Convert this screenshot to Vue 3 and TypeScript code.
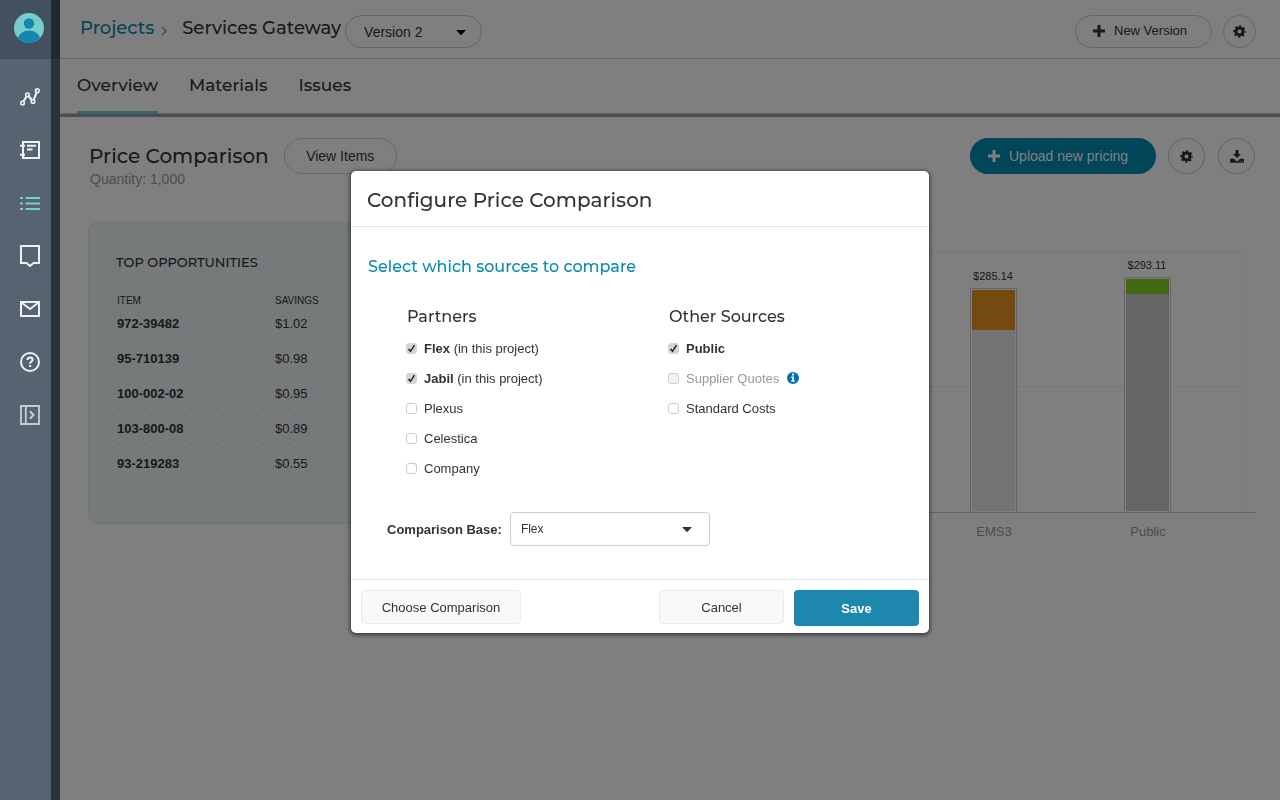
<script setup lang="ts">
import { ref } from 'vue'

interface Source {
  id: string
  name: string
  note?: string
  strong?: boolean
  disabled?: boolean
  info?: boolean
  checked: boolean
}

const tabs = ['Overview', 'Materials', 'Issues']
const activeTab = ref('Overview')
const version = ref('Version 2')
const base = ref('Flex')

const opportunities = [
  { item: '972-39482', savings: '$1.02' },
  { item: '95-710139', savings: '$0.98' },
  { item: '100-002-02', savings: '$0.95' },
  { item: '103-800-08', savings: '$0.89' },
  { item: '93-219283', savings: '$0.55' },
]

const bars = [
  { name: 'EMS3', total: '$285.14', height: 224, top: 40, topColor: '#ea9520', fill: '#e6e6e6' },
  { name: 'Public', total: '$293.11', height: 235, top: 15, topColor: '#7ed321', fill: '#cacaca' },
]

const partners = ref<Source[]>([
  { id: 'flex', name: 'Flex', note: '(in this project)', strong: true, checked: true },
  { id: 'jabil', name: 'Jabil', note: '(in this project)', strong: true, checked: true },
  { id: 'plexus', name: 'Plexus', checked: false },
  { id: 'celestica', name: 'Celestica', checked: false },
  { id: 'company', name: 'Company', checked: false },
])

const others = ref<Source[]>([
  { id: 'public', name: 'Public', strong: true, checked: true },
  { id: 'quotes', name: 'Supplier Quotes', disabled: true, info: true, checked: false },
  { id: 'standard', name: 'Standard Costs', checked: false },
])

const groups = [
  { title: 'Partners', items: partners },
  { title: 'Other Sources', items: others },
]
</script>

<template>
  <div class="app">
    <aside class="sidebar">
      <div class="account">
        <button class="avatar" type="button" title="Account">
          <svg width="30" height="30" viewBox="0 0 30 30">
            <defs><clipPath id="disc"><circle cx="15" cy="15" r="15" /></clipPath></defs>
            <circle cx="15" cy="15" r="15" fill="#76cdca" />
            <g clip-path="url(#disc)" fill="#1587ae">
              <circle cx="15" cy="10.500" r="5.200" />
              <path d="M3 29C4 21.500 8.500 17.500 15 17.500S26 21.500 27 29v2H3z" />
            </g>
          </svg>
        </button>
      </div>
      <nav class="menu">
        <a href="#trends" title="Trends">
          <svg viewBox="0 0 20 20" width="20" height="20" fill="none" stroke="currentColor" stroke-width="1.600">
            <circle cx="2.500" cy="16" r="1.800" /><circle cx="7.500" cy="7.800" r="1.800" />
            <circle cx="13" cy="14.500" r="1.800" /><circle cx="17.300" cy="3.700" r="1.800" />
            <path d="M3.400 14.500 6.600 9.200M8.600 9l3.300 4.200M13.600 12.900l3.100-7.600" stroke-width="2.200" />
          </svg>
        </a>
        <a href="#notebook" title="Notebook">
          <svg viewBox="0 0 20 20" width="20" height="20" fill="none" stroke="currentColor">
            <path d="M3 2h16v16H3z" stroke-width="2" />
            <path d="M0 5.800h5M0 14.800h5M7 5.800h9M7 9.500h5.500" stroke-width="2" />
          </svg>
        </a>
        <a href="#list" title="List" class="current">
          <svg viewBox="0 0 20 20" width="20" height="20" fill="none" stroke="currentColor" stroke-width="2">
            <path d="M0 5h3M5.500 5H20M0 10.500h3M5.500 10.500H20M0 16h3M5.500 16H20" />
          </svg>
        </a>
        <a href="#messages" title="Messages">
          <svg viewBox="0 0 20 22" width="20" height="22" fill="none" stroke="currentColor" stroke-width="2">
            <path d="M1 1h18v17h-5.500L10 21l-3.500-3H1z" />
          </svg>
        </a>
        <a href="#mail" title="Mail">
          <svg viewBox="0 0 20 20" width="20" height="20" fill="none" stroke="currentColor" stroke-width="2">
            <path d="M1 3h18v14H1zM1.500 3.500 10 10l8.500-6.500" />
          </svg>
        </a>
        <a href="#help" title="Help">
          <svg viewBox="0 0 20 20" width="20" height="20" fill="none" stroke="currentColor" stroke-width="2">
            <circle cx="10" cy="10" r="9" />
            <path d="M7.500 8c0-1.700 1.100-2.500 2.500-2.500s2.600.8 2.600 2.200c0 1.800-2.500 1.900-2.500 4M10.100 13v2" />
          </svg>
        </a>
        <a href="#expand" title="Expand" class="soft">
          <svg viewBox="0 0 20 20" width="20" height="20" fill="none" stroke="currentColor" stroke-width="1.800">
            <path d="M1 1h18v18H1zM5.800 1v18" />
            <path d="M10 6.200l3.500 3.800-3.500 3.800" stroke-width="2" />
          </svg>
        </a>
      </nav>
    </aside>

    <main class="main">
      <header class="topbar">
        <a class="crumb-link" href="#projects">Projects</a>
        <svg class="chevron" viewBox="0 0 6 10" width="6" height="10" fill="none" stroke="#999" stroke-width="1.500">
          <path d="M1 1l4 4-4 4" />
        </svg>
        <h1 class="crumb-title">Services Gateway</h1>
        <span class="version">
          <select v-model="version" class="pill version-select" aria-label="Version">
            <option>Version 2</option>
          </select>
          <svg class="caret" viewBox="0 0 10 5" width="10" height="5"><path d="M1 0h8q1 0 .3.800L5.800 4.500q-.8.800-1.600 0L.700.800Q0 0 1 0z" /></svg>
        </span>
        <div class="spacer"></div>
        <button class="pill new-version" type="button">
          <svg viewBox="0 0 12 12" width="12" height="12"><path d="M4.500 0h3v4.500H12v3H7.500V12h-3V7.500H0v-3h4.500z" fill="currentColor" /></svg>
          New Version
        </button>
        <button class="round small" type="button" title="Settings">
          <svg viewBox="0 0 13 13" width="13" height="13" fill="none" stroke="#333">
            <circle cx="6.500" cy="6.500" r="3.500" stroke-width="3" />
            <circle cx="6.500" cy="6.500" r="5.300" stroke-width="2" stroke-dasharray="2.081 2.081" stroke-dashoffset="1.040" />
          </svg>
        </button>
      </header>

      <nav class="tabs">
        <a
          v-for="tab in tabs"
          :key="tab"
          :href="'#' + tab.toLowerCase()"
          :class="{ active: tab === activeTab }"
          @click="activeTab = tab"
        >{{ tab }}</a>
      </nav>

      <section class="content">
        <div class="title-row">
          <div class="title-block">
            <h2>Price Comparison</h2>
            <p>Quantity: 1,000</p>
          </div>
          <button class="pill view-items" type="button">View Items</button>
          <div class="spacer"></div>
          <button class="upload" type="button">
            <svg viewBox="0 0 12 12" width="12" height="12"><path d="M4.500 0h3v4.500H12v3H7.500V12h-3V7.500H0v-3h4.500z" fill="currentColor" /></svg>
            Upload new pricing
          </button>
          <button class="round" type="button" title="Comparison settings">
            <svg viewBox="0 0 13 13" width="13" height="13" fill="none" stroke="#333">
              <circle cx="6.500" cy="6.500" r="3.500" stroke-width="3" />
              <circle cx="6.500" cy="6.500" r="5.300" stroke-width="2" stroke-dasharray="2.081 2.081" stroke-dashoffset="1.040" />
            </svg>
          </button>
          <button class="round" type="button" title="Download">
            <svg viewBox="0 0 14 13" width="14" height="13">
              <path d="M5.500 0h3v4H11L7 8 3 4h2.500zM0 8.800h4l1.600 1.600q1.400 1 2.800 0L10 8.800h4V12q0 .8-.8.800H.8Q0 12.800 0 12zM9.600 11v.9h.9V11zm2 0v.9h.9V11z" fill="#333" fill-rule="evenodd" />
            </svg>
          </button>
        </div>

        <div class="panels">
          <section class="opportunities">
            <h3>TOP OPPORTUNITIES</h3>
            <table>
              <thead>
                <tr><th>ITEM</th><th>SAVINGS</th></tr>
              </thead>
              <tbody>
                <tr v-for="row in opportunities" :key="row.item">
                  <td class="item">{{ row.item }}</td>
                  <td>{{ row.savings }}</td>
                </tr>
              </tbody>
            </table>
          </section>

          <section class="chart">
            <div class="plot">
              <div v-for="bar in bars" :key="bar.name" class="column">
                <span class="total">{{ bar.total }}</span>
                <div class="bar" :style="{ height: bar.height + 'px' }">
                  <div class="bar-fill" :style="{ background: bar.fill }">
                    <div :style="{ height: bar.top + 'px', background: bar.topColor }"></div>
                  </div>
                </div>
              </div>
            </div>
            <div class="axis">
              <span v-for="bar in bars" :key="bar.name">{{ bar.name }}</span>
            </div>
          </section>
        </div>
      </section>
    </main>

    <div class="backdrop"></div>
    <div class="modal-layer">
      <form class="modal" role="dialog" aria-labelledby="modal-title" @submit.prevent>
        <header class="modal-head"><h2 id="modal-title">Configure Price Comparison</h2></header>
        <div class="modal-body">
          <h3>Select which sources to compare</h3>
          <div class="groups">
            <fieldset v-for="group in groups" :key="group.title">
              <legend>{{ group.title }}</legend>
              <div v-for="source in group.items.value" :key="source.id" class="source" :class="{ disabled: source.disabled }">
                <input :id="source.id" v-model="source.checked" type="checkbox" :disabled="source.disabled" />
                <label :for="source.id">
                  <b v-if="source.strong">{{ source.name }}</b><template v-else>{{ source.name }}</template>
                  {{ source.note }}
                </label>
                <svg v-if="source.info" class="info" viewBox="0 0 12 12" width="12" height="12">
                  <circle cx="6" cy="6" r="6" fill="#0072bc" />
                  <path d="M5 1.600h2v1.800H5zM4.200 4.500H7v3.900h.9v1.300H4.200V8.400H5V5.700h-.8z" fill="#fff" />
                </svg>
              </div>
            </fieldset>
          </div>
          <div class="base">
            <label for="base">Comparison Base:</label>
            <span class="base-box">
              <select id="base" v-model="base"><option>Flex</option></select>
              <svg class="caret" viewBox="0 0 10 5" width="10" height="5"><path d="M1 0h8q1 0 .3.800L5.800 4.500q-.8.800-1.600 0L.700.800Q0 0 1 0z" fill="#333" /></svg>
            </span>
          </div>
        </div>
        <footer class="modal-foot">
          <button class="btn choose" type="button">Choose Comparison</button>
          <div class="spacer"></div>
          <button class="btn" type="button">Cancel</button>
          <button class="btn save" type="submit">Save</button>
        </footer>
      </form>
    </div>
  </div>
</template>

<style>
body {
  margin: 0;
}
</style>

<style scoped>
.app {
  display: flex;
  min-height: 100vh;
  background: #fff;
  color: #333;
  font-family: 'Liberation Sans', Arial, sans-serif;
  font-size: 13px;
}
.app *,
.app {
  box-sizing: border-box;
}
h1,
h2,
h3,
p {
  margin: 0;
}
h1,
h2,
h3,
legend,
.crumb-link,
.tabs a {
  font-family: Montserrat, Inter, sans-serif;
  font-weight: 500;
}
a {
  text-decoration: none;
}
button,
select {
  font-family: inherit;
  color: inherit;
  cursor: pointer;
}
.spacer {
  flex: 1;
}

/* Sidebar */
.sidebar {
  width: 60px;
  flex: none;
  background: #566472;
}
.account {
  height: 59px;
  padding: 13px 14px;
  background: #435060;
}
.avatar {
  display: block;
  padding: 0;
  border: 0;
  background: none;
}
.avatar svg {
  display: block;
}
.menu {
  padding-top: 11px;
}
.menu a {
  display: flex;
  align-items: center;
  justify-content: center;
  height: 53px;
  color: #eef0f2;
}
.menu .current {
  color: #76cdca;
}
.menu .soft {
  color: #c9cccf;
}

/* Top bar */
.main {
  flex: 1;
  min-width: 0;
}
.topbar {
  display: flex;
  align-items: flex-start;
  height: 59px;
  padding: 15px 24px 0 20px;
  border-bottom: 1px solid #ccc;
}
.crumb-link,
.crumb-title {
  font-size: 18px;
  line-height: 26px;
}
.crumb-link {
  color: #0889ae;
}
.chevron {
  margin: 11px 15px 0 7px;
}
.pill {
  border: 1px solid #ccc;
  border-radius: 18px;
  background: transparent;
  font-size: 14px;
}
.version,
.base-box {
  position: relative;
}
.version {
  margin-left: 4px;
}
.version-select {
  width: 137px;
  height: 33px;
  padding: 0 18px;
  appearance: none;
}
.caret {
  position: absolute;
  top: 15px;
  right: 16px;
  pointer-events: none;
}
.new-version {
  display: flex;
  align-items: center;
  justify-content: center;
  gap: 9px;
  width: 137px;
  height: 33px;
  padding: 0 7px 2px 0;
  font-size: 13px;
}
.round {
  display: flex;
  align-items: center;
  justify-content: center;
  width: 37px;
  height: 36px;
  margin-left: 13px;
  padding: 0;
  border: 1px solid #ccc;
  border-radius: 50%;
  background: transparent;
}
.round.small {
  width: 33px;
  height: 33px;
  margin-left: 11px;
}

/* Tabs */
.tabs {
  display: flex;
  gap: 31px;
  height: 58px;
  padding-left: 17px;
  border-bottom: 3px solid #949ba8;
  box-shadow: inset 0 -1px #ccc;
}
.tabs a {
  height: 55px;
  color: #333;
  font-size: 17px;
  line-height: 52px;
}
.tabs a.active {
  border-bottom: 3px solid #76cdca;
}

/* Content */
.content {
  padding: 21px 25px 0 28px;
}
.title-row {
  display: flex;
  align-items: flex-start;
}
.title-block {
  padding-left: 1px;
}
.title-block h2 {
  font-size: 20px;
  line-height: 36px;
}
.title-block p {
  padding-left: 1px;
  color: #999;
  font-size: 14px;
  line-height: 10px;
}
.view-items {
  width: 113px;
  height: 36px;
  margin-left: 15px;
}
.upload {
  display: flex;
  align-items: center;
  gap: 9px;
  width: 186px;
  height: 36px;
  padding: 0 18px;
  border: 0;
  border-radius: 18px;
  background: #008ab0;
  color: #fff;
  font-size: 14px;
}
.upload + .round {
  margin-left: 12px;
}
.panels {
  display: flex;
  margin-top: 38px;
}
.opportunities {
  width: 300px;
  height: 302px;
  padding: 31px 27px;
  border: 1px solid #d2eaf3;
  border-radius: 10px;
  background: #ecf4f6;
}
.opportunities h3 {
  font-size: 13px;
  line-height: 16px;
}
table {
  width: 202px;
  margin: 23px 0 0 1px;
  border-spacing: 0;
}
th {
  height: 14px;
  padding: 0;
  font-size: 10px;
  font-weight: 400;
  text-align: left;
}
th:first-child {
  width: 158px;
}
td {
  height: 35px;
  padding: 0 0 2px;
}
.item {
  font-weight: 700;
}
tbody tr:not(:last-child) {
  background: repeating-linear-gradient(90deg, #e0e7e9 0 3px, transparent 3px 9px) left bottom 2px / 100% 2px no-repeat;
}

/* Chart */
.chart {
  flex: 1;
  padding-top: 30px;
}
.plot {
  display: flex;
  justify-content: flex-end;
  align-items: flex-end;
  height: 260px;
  margin-right: 10px;
  padding-right: 20px;
  border-top: 1px solid #f0f0f0;
  border-right: 1px solid #f6f6f6;
  background: linear-gradient(#eee, #eee) 0 133px / 100% 1px no-repeat;
}
.column {
  display: flex;
  flex-direction: column;
  align-items: center;
  width: 154px;
}
.total {
  font-size: 11px;
  line-height: 23px;
}
.bar {
  width: 47px;
  padding: 1px;
  border: 1px solid #ccc;
  border-bottom: 0;
  background: #fff;
}
.bar-fill {
  height: 100%;
}
.axis {
  display: flex;
  justify-content: flex-end;
  padding: 11px 30px 0 0;
  border-top: 1px solid #ccc;
  color: #999;
  line-height: 15px;
}
.axis span {
  width: 154px;
  text-align: center;
}

/* Modal */
.backdrop {
  position: fixed;
  inset: 0 0 0 51px;
  background: rgba(0, 0, 0, 0.5);
}
.modal-layer {
  position: fixed;
  inset: 0;
  display: flex;
  justify-content: center;
  align-items: flex-start;
  padding-top: 171px;
}
.modal {
  width: 578px;
  border-radius: 5px;
  background: #fff;
  box-shadow: 0 1px 4px 1px rgba(0, 0, 0, 0.6);
}
.modal-head {
  padding: 16px 16px 12px;
  border-bottom: 1px solid #e2e2e2;
}
.modal-head h2 {
  font-size: 20px;
  line-height: 27px;
}
.modal-body {
  padding: 29px 17px 33px;
}
.modal-body h3 {
  color: #0889ae;
  font-size: 16px;
  line-height: 22px;
}
.groups {
  display: grid;
  grid-template-columns: 262px 1fr;
  padding: 28px 0 0 38px;
}
fieldset {
  margin: 0;
  padding: 0;
  border: 0;
}
legend {
  padding: 0 0 5px 1px;
  font-size: 16px;
  line-height: 22px;
}
.source {
  display: flex;
  align-items: center;
  height: 30px;
}
.source input {
  width: 11px;
  height: 11px;
  margin: 0 7px 0 0;
  border: 1px solid #ccc;
  border-radius: 3px;
  appearance: none;
  background: #fff;
}
.source input:checked {
  border-color: #d4d4d4;
  background: #d4d4d4 url("data:image/svg+xml,%3Csvg xmlns='http://www.w3.org/2000/svg' viewBox='0 0 9 9'%3E%3Cpath d='M1.500 5l2 2.300L7.500 1.200' fill='none' stroke='%23222' stroke-width='1.500'/%3E%3C/svg%3E") center / 9px 9px no-repeat;
}
.source.disabled input {
  background: #f2f2f2;
}
.source.disabled {
  color: #999;
}
.info {
  margin-left: 8px;
}
.base {
  display: flex;
  align-items: center;
  gap: 8px;
  margin-top: 29px;
  padding-left: 19px;
}
.base label {
  font-weight: 700;
}
.base select {
  display: block;
  width: 200px;
  height: 34px;
  padding: 0 10px;
  border: 1px solid #ccc;
  border-radius: 4px;
  appearance: none;
  background: #fff;
  font-size: 12px;
}
.base .caret {
  right: 18px;
}
.modal-foot {
  display: flex;
  align-items: flex-start;
  gap: 10px;
  padding: 10px 10px 7px;
  border-top: 1px solid #e2e2e2;
}
.modal-foot .spacer {
  margin-right: -10px;
}
.btn {
  width: 125px;
  height: 34px;
  border: 1px solid #ebebeb;
  border-radius: 4px;
  background: #f9f9f9;
  font-size: 13px;
}
.choose {
  width: 160px;
}
.save {
  height: 36px;
  border: 0;
  background: #1d87ad;
  color: #fff;
  font-weight: 700;
}
</style>
